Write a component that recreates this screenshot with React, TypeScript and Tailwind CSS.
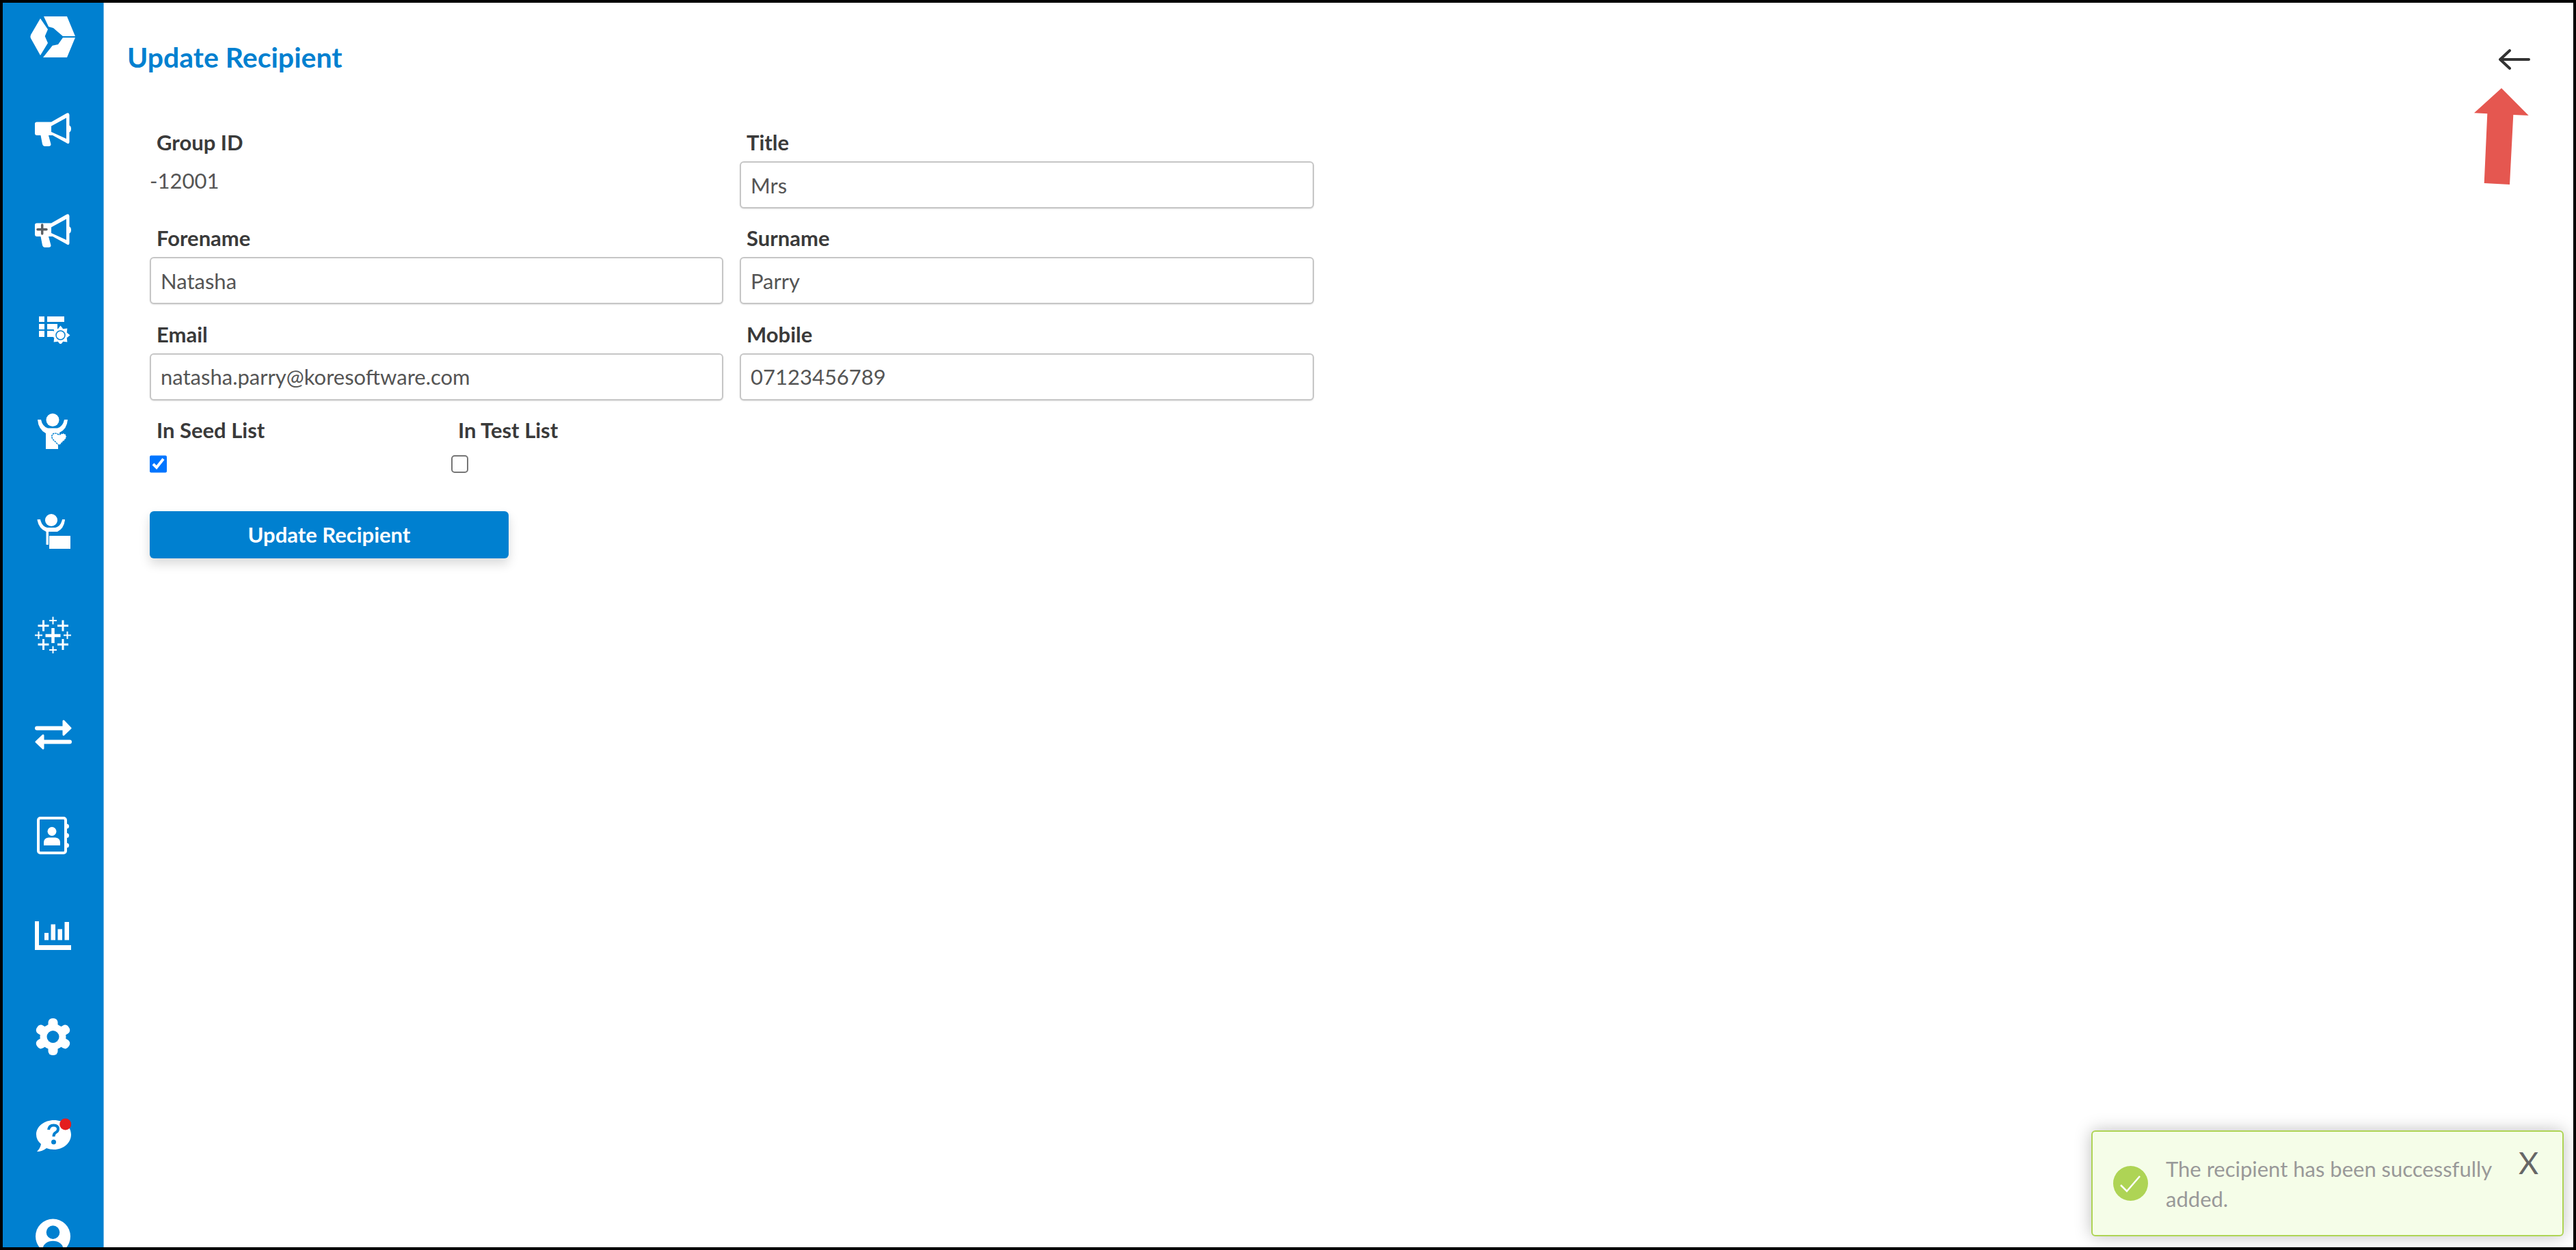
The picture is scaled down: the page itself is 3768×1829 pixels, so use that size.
const BLUE = "#0080D0";

function Logo() {
  return (
    <svg width="67" height="62" viewBox="0 0 67 62" fill="white">
      <path d="M20 0H54L66 29H48L34 17L27 15Z" />
      <path d="M1 27L15 3L26 19L21.7 29L26 39L15 57L1 32Q0 29.500 1 27Z" />
      <path d="M19 60L32.700 42.700L41 41L48 31H66L54 60Z" />
    </svg>
  );
}

function Megaphone({ plus }: { plus?: boolean }) {
  return (
    <svg width="53" height="49" viewBox="0 0 53 49">
      <path
        fillRule="evenodd"
        fill="white"
        d="M3 13.500H24L46 1Q50 -1 50.500 3V18.500Q53 19.500 53 23.500T50.500 28.500V43Q50 47 46 44L26 33H20L23.500 46Q23.500 49 20 49H14Q12 49 11 46L8.500 33H3Q0 33 0 30V16Q0 13.500 3 13.500ZM24 19.500V28L46 38V7.500Z"
      />
      {plus && (
        <path d="M10.700 16V29M4 22.700H17" stroke="#5a5f63" strokeWidth="3.500" strokeLinecap="round" />
      )}
    </svg>
  );
}

function ListGear() {
  const teeth = [0, 45, 90, 135, 180, 225, 270, 315];
  return (
    <svg width="47" height="41" viewBox="0 0 47 41" fill="white">
      <rect x="1" y="1" width="8" height="8" />
      <rect x="1" y="12" width="8" height="8" />
      <rect x="1" y="22" width="8" height="9" />
      <rect x="13" y="1" width="25" height="8" />
      <rect x="13" y="12" width="15" height="8" />
      <path d="M13 22H22L26 26.500L22 31H13Z" />
      <g transform="translate(32.500 28.500)">
        {teeth.map((a) => (
          <path key={a} transform={`rotate(${a})`} d="M-4 -9L0 -14L4 -9Z" />
        ))}
        <circle r="10" />
        <circle r="6.500" fill="none" stroke={BLUE} strokeWidth="1.500" />
      </g>
    </svg>
  );
}

function PersonHeart() {
  return (
    <svg width="46" height="52" viewBox="0 0 46 52" fill="white">
      <circle cx="23" cy="9.500" r="9.500" />
      <path d="M1 9H6Q8 19 16 21.500H30Q38 19 40 9H45Q44 23 33 28V42H31V52H13V29Q2 23 1 9Z" />
      <path
        d="M32.500 47L23.500 38Q20 33.500 23.500 30Q27.500 27.500 32.500 31.500Q37.500 27.500 41.500 30Q45 33.500 41.500 38Z"
        stroke={BLUE}
        strokeWidth="1.500"
        strokeDasharray="2.500 1"
      />
    </svg>
  );
}

function PersonCard() {
  return (
    <svg width="49" height="51" viewBox="0 0 49 51" fill="white">
      <circle cx="21" cy="9" r="9" />
      <path d="M0.500 8H5Q7 18 15 20H27Q35 18 37 8H41Q40 21 30 26H17V45H13.500V26Q2 21 0.500 8Z" />
      <rect x="18" y="32" width="31" height="19" />
    </svg>
  );
}

function TableauMark() {
  const marks = [
    { x: 26.500, y: 28, s: 11, w: 4.500 },
    { x: 26.500, y: 6, s: 5.500, w: 2 },
    { x: 26.500, y: 49, s: 5.500, w: 2 },
    { x: 5.500, y: 27.500, s: 5.500, w: 2 },
    { x: 47.500, y: 27.500, s: 5.500, w: 2 },
    { x: 12.500, y: 13.500, s: 8, w: 3 },
    { x: 41, y: 13.500, s: 8, w: 3 },
    { x: 12.500, y: 41, s: 8, w: 3 },
    { x: 41, y: 41, s: 8, w: 3 },
  ];
  return (
    <svg width="53" height="54" viewBox="0 0 53 54" stroke="white">
      {marks.map((m) => (
        <path
          key={`${m.x}-${m.y}`}
          strokeWidth={m.w}
          d={`M${m.x - m.s} ${m.y}H${m.x + m.s}M${m.x} ${m.y - m.s}V${m.y + m.s}`}
        />
      ))}
    </svg>
  );
}

function SwapArrows() {
  return (
    <svg width="54" height="44" viewBox="0 0 54 44" fill="white" stroke="white" strokeLinejoin="round">
      <path d="M3 12.500H44" strokeWidth="6" strokeLinecap="round" />
      <path d="M42 2L52 12.500L42 22Z" strokeWidth="3" />
      <path d="M51 32.500H10" strokeWidth="6" strokeLinecap="round" />
      <path d="M12 23L2 32.500L12 42Z" strokeWidth="3" />
    </svg>
  );
}

function ContactBook() {
  return (
    <svg width="47" height="55" viewBox="0 0 47 55" fill="white">
      <rect x="2" y="2" width="40" height="51" rx="3" fill="none" stroke="white" strokeWidth="4" />
      <circle cx="43.500" cy="14" r="3.500" />
      <circle cx="43.500" cy="27.500" r="3.500" />
      <circle cx="43.500" cy="42" r="3.500" />
      <circle cx="22" cy="21.500" r="6.500" />
      <path d="M10 42V38Q10 31 17 30.500H27Q34 31 34 38V42Z" />
    </svg>
  );
}

function BarChart() {
  return (
    <svg width="53" height="42" viewBox="0 0 53 42" fill="white">
      <path d="M0 0H6V35H53V42H0Z" />
      <rect x="14" y="17" width="6" height="10.500" />
      <rect x="23.500" y="4.500" width="6.500" height="23" />
      <rect x="33.500" y="11.500" width="6.500" height="16" />
      <rect x="43.500" y="1" width="6.500" height="26.500" />
    </svg>
  );
}

function Cog() {
  return (
    <svg width="51" height="54" viewBox="-25.500 -27 51 54" fill="white">
      <circle r="19" />
      {[0, 60, 120].map((a) => (
        <rect key={a} x="-7" y="-27" width="14" height="54" rx="6" transform={`rotate(${a})`} />
      ))}
      <circle r="9" fill={BLUE} />
    </svg>
  );
}

function HelpBubble() {
  return (
    <svg width="51" height="50" viewBox="0 0 51 50">
      <path
        fill="white"
        d="M26 3C40 3 51 12 51 24C51 36 40 46 26 46C22 46 18 45 15 44Q9 49 1 49Q6 44 7 38Q0 32 0 24C0 12 12 3 26 3Z"
      />
      <path
        d="M18 17Q19 10.500 25.500 10.500Q32 10.500 32 16Q32 19.500 28 21.500Q25.500 23 25.500 27"
        fill="none"
        stroke={BLUE}
        strokeWidth="4"
      />
      <circle cx="25.500" cy="35" r="3.500" fill={BLUE} />
      <circle cx="42.700" cy="9" r="8.500" fill="#E41E1E" />
    </svg>
  );
}

function UserBadge() {
  return (
    <svg width="51" height="52" viewBox="0 0 52 52" className="shrink-0">
      <circle cx="26" cy="26" r="26" fill="white" />
      <circle cx="26" cy="20" r="10" fill={BLUE} />
      <ellipse cx="26" cy="44" rx="15" ry="11" fill={BLUE} />
    </svg>
  );
}

function Sidebar() {
  return (
    <aside className="flex h-full w-[148px] shrink-0 flex-col overflow-hidden border-r border-[#66b3e3] bg-[#0080D0] pl-[47px]">
      <div className="-ml-[7px] mt-[20px]"><Logo /></div>
      <div className="mt-[79px]"><Megaphone /></div>
      <div className="mt-[99px]"><Megaphone plus /></div>
      <div className="ml-[5px] mt-[100px]"><ListGear /></div>
      <div className="ml-[3px] mt-[102px]"><PersonHeart /></div>
      <div className="ml-[3px] mt-[95px]"><PersonCard /></div>
      <div className="mt-[99px]"><TableauMark /></div>
      <div className="mt-[97px]"><SwapArrows /></div>
      <div className="ml-[3px] mt-[98px]"><ContactBook /></div>
      <div className="mt-[98px]"><BarChart /></div>
      <div className="ml-[1px] mt-[100px]"><Cog /></div>
      <div className="ml-[2px] mt-[92px]"><HelpBubble /></div>
      <div className="ml-[1px] mt-[97px]"><UserBadge /></div>
    </aside>
  );
}

function Field({ label, value }: { label: string; value: string }) {
  return (
    <div className="h-[140.300px]">
      <label className="mb-[8px] block h-[40px] pl-[10px] text-[31px] font-bold leading-[40px] text-[#3a3a3a]">
        {label}
      </label>
      <input
        readOnly
        defaultValue={value}
        className="h-[69px] w-full rounded-[6px] border-2 border-[#c6c6c6] bg-white px-[14px] text-[31px] text-[#555] shadow-[0_1px_2px_rgba(0,0,0,0.1)]"
      />
    </div>
  );
}

export default function App() {
  return (
    <div className="relative flex h-[1829px] w-[3768px] overflow-hidden border-4 border-black bg-white font-['Lato',sans-serif]">
      <Sidebar />

      <main className="flex-1">
        <header className="mb-[18px] flex h-[166px] items-center justify-between pl-[34px] pr-[63px]">
          <h1 className="-mt-[6px] text-[41px] font-bold text-[#0080D0]">Update Recipient</h1>
          <svg width="46" height="30" viewBox="0 0 46 30" fill="none" stroke="#333" strokeWidth="4" strokeLinecap="round" strokeLinejoin="round">
            <path d="M44 15H2M16 2L2 15L16 28" />
          </svg>
        </header>

        <form className="pl-[67px]">
          <div className="grid w-[1703px] grid-cols-[839px_840px] gap-x-[24px]">
            <div className="h-[140.300px]">
              <label className="mb-[16px] block h-[40px] pl-[10px] text-[31px] font-bold leading-[40px] text-[#3a3a3a]">
                Group ID
              </label>
              <p className="text-[31px] leading-[40px] text-[#555]">-12001</p>
            </div>
            <Field label="Title" value="Mrs" />
            <Field label="Forename" value="Natasha" />
            <Field label="Surname" value="Parry" />
            <Field label="Email" value="natasha.parry@koresoftware.com" />
            <Field label="Mobile" value="07123456789" />
          </div>

          <div className="flex">
            <div className="w-[441px]">
              <label className="mb-[17px] block h-[40px] pl-[10px] text-[31px] font-bold leading-[40px] text-[#3a3a3a]">
                In Seed List
              </label>
              <input type="checkbox" defaultChecked className="m-0 block h-[26px] w-[25px]" />
            </div>
            <div>
              <label className="mb-[17px] block h-[40px] pl-[10px] text-[31px] font-bold leading-[40px] text-[#3a3a3a]">
                In Test List
              </label>
              <input type="checkbox" className="m-0 block h-[26px] w-[25px] appearance-none rounded-[5px] border-2 border-[#767676] bg-white" />
            </div>
          </div>

          <button
            type="button"
            className="mt-[56px] h-[69px] w-[525px] rounded-[6px] bg-[#0080D0] text-[31px] font-bold text-white shadow-[0_8px_16px_rgba(0,0,0,0.15)]"
          >
            Update Recipient
          </button>
        </form>
      </main>

      {/* annotation arrow over the page */}
      <svg className="absolute left-[3615px] top-[125px]" width="80" height="148" viewBox="0 0 80 148" fill="#E55750">
        <path d="M40 0L0 36.300L19.300 37.300L14.700 139L52 141L57.300 39L79.700 40Z" />
      </svg>

      <div className="absolute bottom-[16px] right-[14px] flex h-[155px] w-[691px] items-center rounded-[6px] border-2 border-[#AED455] bg-[#F5FDE8] pl-[30px] shadow-[0_0_24px_rgba(0,0,0,0.25)]">
        <svg className="shrink-0" width="51" height="51" viewBox="0 0 51 51">
          <circle cx="25.500" cy="25.500" r="25.500" fill="#AED455" />
          <path d="M11 28L20 37L39 15" fill="none" stroke="white" strokeWidth="2.500" />
        </svg>
        <p className="ml-[26px] w-[490px] text-[31px] leading-[44px] text-[#999]">
          The recipient has been successfully added.
        </p>
        <span className="mb-[60px] ml-[26px] text-[45px] leading-none text-[#666]">X</span>
      </div>
    </div>
  );
}
